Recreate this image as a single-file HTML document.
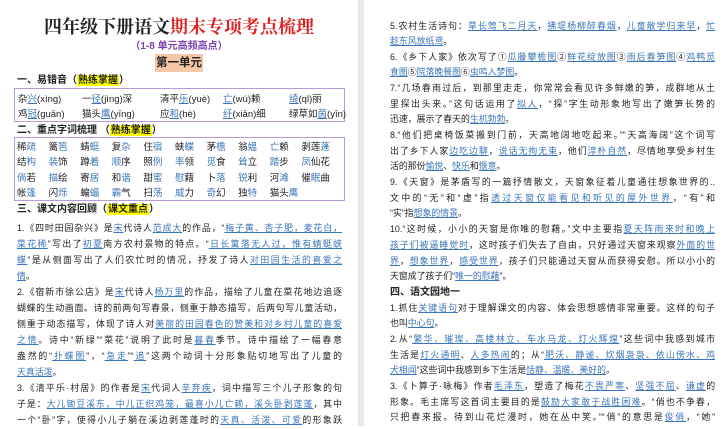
<!DOCTYPE html>
<html><head><meta charset="utf-8"><style>
*{margin:0;padding:0;box-sizing:border-box}
body{width:726px;height:426px;overflow:hidden;background:#fff;font-family:"Liberation Sans","Noto Sans CJK SC",sans-serif;color:#222;position:relative}
.pg{position:absolute;top:0;height:426px;background:#fff}
.l{position:absolute;font-size:8.9px;line-height:15.7px;white-space:nowrap;overflow:hidden}
.j{text-align:justify;text-align-last:justify;white-space:normal;height:15.7px}
u,.b{color:#3b74b8}
u{text-decoration:underline;text-decoration-color:#3b74b8}
.hd{font-weight:bold;font-size:10px}
.y{background:#ffff00;color:#222;padding:0 1px}
.box{position:absolute;border:1.5px solid #b89ad8}
.g{position:absolute;font-size:9.5px;white-space:nowrap}
.gr{position:absolute;left:17px;font-size:9.5px;white-space:nowrap;line-height:15.3px}
.gr span.c{display:inline-block;width:31.6px}
</style></head><body>
<div style="position:absolute;left:358px;top:0;width:6px;height:426px;background:#e6e8ee"></div>
<div class="pg" style="left:0;width:358px">
<div style="position:absolute;top:13px;left:0;width:358px;text-align:center;font-size:18px;font-weight:bold;font-family:'Noto Serif CJK SC',serif">四年级下册语文<span style="color:#d22">期末专项考点梳理</span></div>
<div style="position:absolute;top:37px;left:0;width:358px;text-align:center;font-size:10px;font-weight:bold;color:#7a3fb0">（1-8 单元高频高点）</div>
<div style="position:absolute;top:54px;left:155px;width:48px;height:18px;background:#f5c7a9;text-align:center;font-size:11.5px;font-weight:bold;line-height:18px">第一单元</div>
<div class="l hd" style="left:17px;top:73px">一、易错音（<span class="y">熟练掌握</span>）</div>
<div class="box" style="left:14px;top:88px;width:331px;height:34px"></div>
<div class="g" style="left:18px;top:91px">杂<u>兴</u>(xìng)</div><div class="g" style="left:82px;top:91px">一<u>径</u>(jìng)深</div><div class="g" style="left:160px;top:91px">清平<u>乐</u>(yuè)</div><div class="g" style="left:223px;top:91px"><u>亡</u>(wú)赖</div><div class="g" style="left:289px;top:91px"><u>绮</u>(qǐ)丽</div>
<div class="g" style="left:18px;top:106px">鸡<u>冠</u>(guān)</div><div class="g" style="left:82px;top:106px">猫头<u>鹰</u>(yīng)</div><div class="g" style="left:160px;top:106px">应<u>和</u>(hè)</div><div class="g" style="left:223px;top:106px"><u>纤</u>(xiān)细</div><div class="g" style="left:289px;top:106px">绿草如<u>茵</u>(yīn)</div>
<div class="l hd" style="left:17px;top:123px">二、重点字词梳理 （<span class="y">熟练掌握</span>）</div>
<div class="box" style="left:14px;top:137px;width:331px;height:64px"></div>
<div class="gr" style="top:140px">
<div><span class="c">稀<span class="b">疏</span></span><span class="c">篱<span class="b">笆</span></span><span class="c">蜻<span class="b">蜓</span></span><span class="c">复<span class="b">杂</span></span><span class="c">住<span class="b">宿</span></span><span class="c">蛱<span class="b">蝶</span></span><span class="c">茅<span class="b">檐</span></span><span class="c">翁<span class="b">媪</span></span><span class="c"><span class="b">亡</span>赖</span><span class="c">剥莲<span class="b">蓬</span></span></div>
<div><span class="c">结<span class="b">构</span></span><span class="c"><span class="b">装</span>饰</span><span class="c">蹲<span class="b">着</span></span><span class="c"><span class="b">顺</span>序</span><span class="c">照<span class="b">例</span></span><span class="c"><span class="b">率</span>领</span><span class="c"><span class="b">觅</span>食</span><span class="c"><span class="b">耸</span>立</span><span class="c"><span class="b">踏</span>步</span><span class="c"><span class="b">凤</span>仙花</span></div>
<div><span class="c"><span class="b">倘</span>若</span><span class="c"><span class="b">描</span>绘</span><span class="c">寄<span class="b">居</span></span><span class="c">和<span class="b">谐</span></span><span class="c">甜<span class="b">蜜</span></span><span class="c"><span class="b">慰</span>藉</span><span class="c">卜<span class="b">落</span></span><span class="c"><span class="b">锐</span>利</span><span class="c">河<span class="b">滩</span></span><span class="c">催<span class="b">眠</span>曲</span></div>
<div><span class="c">帐<span class="b">篷</span></span><span class="c">闪<span class="b">烁</span></span><span class="c">蝙<span class="b">蝠</span></span><span class="c"><span class="b">霸</span>气</span><span class="c">扫<span class="b">荡</span></span><span class="c"><span class="b">威</span>力</span><span class="c"><span class="b">奇</span>幻</span><span class="c">独<span class="b">特</span></span><span class="c">猫头<span class="b">鹰</span></span></div>
</div>
<div class="l hd" style="left:17px;top:202px">三、课文内容回顾（<span class="y">课文重点</span>）</div>
<div class="l j" style="left:17px;top:221px;width:325px">1.《四时田园杂兴》是<u>宋</u>代诗人<u>范成大</u>的作品，“<u>梅子黄、杏子肥，麦花白，</u></div>
<div class="l j" style="left:17px;top:237px;width:325px"><u>菜花稀</u>”写出了<u>初夏</u>南方农村景物的特点。“<u>日长篱落无人过，惟有蜻蜓蛱</u></div>
<div class="l j" style="left:17px;top:253px;width:325px"><u>蝶</u>”是从侧面写出了人们农忙时的情况，抒发了诗人<u>对田园生活的喜爱之</u></div>
<div class="l" style="left:17px;top:269px"><u>情</u>。</div>
<div class="l j" style="left:17px;top:285px;width:325px">2.《宿新市徐公店》是<u>宋</u>代诗人<u>杨万里</u>的作品，描绘了儿童在菜花地边追逐</div>
<div class="l j" style="left:17px;top:301px;width:325px">蝴蝶的生动画面。诗的前两句写春景，侧重于静态描写，后两句写儿童活动，</div>
<div class="l j" style="left:17px;top:317px;width:325px">侧重于动态描写，体现了诗人对<u>美丽的田园春色的赞美和对乡村儿童的喜爱</u></div>
<div class="l j" style="left:17px;top:333px;width:325px"><u>之情</u>。诗中“新绿”“菜花”说明了此时是<u>暮春</u>季节。诗中描绘了一幅春意</div>
<div class="l j" style="left:17px;top:349px;width:325px">盎然的“<u>扑蝶图</u>”，“<u>急走</u>”“<u>追</u>”这两个动词十分形象贴切地写出了儿童的</div>
<div class="l" style="left:17px;top:365px"><u>天真活泼</u>。</div>
<div class="l j" style="left:17px;top:381px;width:325px">3.《清平乐·村居》的作者是<u>宋</u>代词人<u>辛弃疾</u>，词中描写三个儿子形象的句</div>
<div class="l j" style="left:17px;top:397px;width:325px">子是：<u>大儿锄豆溪东，中儿正织鸡笼，最喜小儿亡赖，溪头卧剥莲蓬</u>，其中</div>
<div class="l j" style="left:17px;top:413px;width:325px">一个“卧”字，使得小儿子躺在溪边剥莲蓬时的<u>天真、活泼、可爱</u>的形象跃</div>
</div>
<div class="pg" style="left:364px;width:362px">
<div class="l j" style="left:26px;top:19px;width:325px">5.农村生活诗句：<u>草长莺飞二月天</u>，<u>拂堤杨柳醉春烟</u>，<u>儿童散学归来早</u>，<u>忙</u></div>
<div class="l" style="left:26px;top:34px"><u>趁东风放纸鸢</u>。</div>
<div class="l j" style="left:26px;top:50px;width:325px">6.《乡下人家》依次写了①<u>瓜藤攀檐图</u>②<u>鲜花绽放图</u>③<u>雨后春笋图</u>④<u>鸡鸭觅</u></div>
<div class="l" style="left:26px;top:65px"><u>食图</u>⑤<u>院落晚餐图</u>⑥<u>虫鸣入梦图</u>。</div>
<div class="l j" style="left:26px;top:81px;width:325px">7.“几场春雨过后，到那里走走，你常常会看见许多鲜嫩的笋，成群地从土</div>
<div class="l j" style="left:26px;top:97px;width:325px">里探出头来。”这句话运用了<u>拟人</u>，“探”字生动形象地写出了嫩笋长势的</div>
<div class="l" style="left:26px;top:112px">迅速，展示了春天的<u>生机勃勃</u>。</div>
<div class="l j" style="left:26px;top:128px;width:325px">8.“他们把桌椅饭菜搬到门前，天高地阔地吃起来。”“天高海阔”这个词写</div>
<div class="l j" style="left:26px;top:144px;width:325px">出了乡下人家<u>边吃边聊</u>，<u>说话无拘无束</u>，他们<u>淳朴自然</u>，尽情地享受乡村生</div>
<div class="l" style="left:26px;top:159px">活的那份<u>愉悦</u>、<u>快乐</u>和<u>惬意</u>。</div>
<div class="l j" style="left:26px;top:175px;width:325px">9.《天窗》是茅盾写的一篇抒情散文，天窗象征着儿童通往想象世界的..</div>
<div class="l j" style="left:26px;top:191px;width:325px">文中的“无”和“虚”指<u>透过天窗仅能看见和听见的屋外世界</u>，“有”和</div>
<div class="l" style="left:26px;top:206px">“实”指<u>想象的情景</u>。</div>
<div class="l j" style="left:26px;top:222px;width:325px">10.“这时候，小小的天窗是你唯的慰藉。”文中主要指<u>夏天阵雨来时和晚上</u></div>
<div class="l j" style="left:26px;top:238px;width:325px"><u>孩子们被逼睡觉时</u>，这时孩子们失去了自由，只好通过天窗来观察<u>外面的世</u></div>
<div class="l j" style="left:26px;top:254px;width:325px"><u>界</u>，<u>想象世界</u>，<u>感受世界</u>，孩子们只能通过天窗从而获得安慰。所以小小的</div>
<div class="l" style="left:26px;top:269px">天窗成了孩子们“<u>唯一的慰藉</u>”。</div>
<div class="l hd" style="left:26px;top:285px">四、语文园地一</div>
<div class="l j" style="left:26px;top:301px;width:325px">1.抓住<u>关键语句</u>对于理解课文的内容、体会思想感情非常重要。这样的句子</div>
<div class="l" style="left:26px;top:316px">也叫<u>中心句</u>。</div>
<div class="l j" style="left:26px;top:332px;width:325px">2.从“<u>繁华、璀璨、高楼林立、车水马龙、灯火辉煌</u>”这些词中我感到城市</div>
<div class="l j" style="left:26px;top:348px;width:325px">生活是<u>灯火通明</u>、<u>人多热闹</u>的；从“<u>肥沃、静谧、炊烟袅袅、依山傍水、鸡</u></div>
<div class="l" style="left:26px;top:363px"><u>犬相闻</u>”这些词中我感到乡下生活是<u>恬静、温暖、美好的</u>。</div>
<div class="l j" style="left:26px;top:379px;width:325px">3.《卜算子·咏梅》作者<u>毛泽东</u>，塑造了梅花<u>不畏严寒</u>、<u>坚强不屈</u>、<u>谦虚</u>的</div>
<div class="l j" style="left:26px;top:395px;width:325px">形象。毛主席写这首词主要目的是<u>鼓励大家敢于战胜困难</u>。“俏也不争春，</div>
<div class="l j" style="left:26px;top:410px;width:325px">只把春来报。待到山花烂漫时，她在丛中笑。”“俏”的意思是<u>俊俏</u>，“她”</div>
</div>
</body></html>
